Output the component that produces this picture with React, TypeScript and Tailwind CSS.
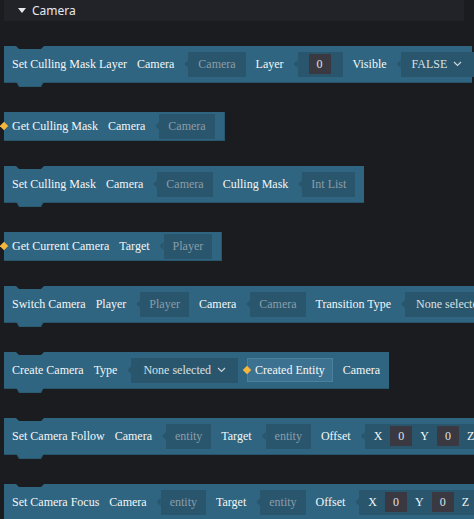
import React from "react";

type Kids = { children?: React.ReactNode; className?: string };

function Chevron() {
  return (
    <svg width="9" height="6" viewBox="0 0 9 6" className="ml-[6px]">
      <polyline points="1,1 4.5,4.5 8,1" fill="none" stroke="#c9d4db" strokeWidth="1.2" />
    </svg>
  );
}

function Diamond({ className }: { className: string }) {
  return <div className={`absolute h-[6px] w-[6px] rotate-45 bg-[#f4b73c] ${className}`} />;
}

function Slot({ children, className }: Kids) {
  return (
    <div className="flex shrink-0 items-center">
      <div className="h-[8px] w-[4px] bg-[#29566d] [clip-path:polygon(100%_0,100%_100%,0_50%)]" />
      <div className={`flex h-[25px] items-center bg-[#29566d] ${className ?? "px-[9px]"}`}>{children}</div>
    </div>
  );
}

function Hint({ children }: Kids) {
  return <span className="text-[#8b9da9]">{children}</span>;
}

function Label({ children }: Kids) {
  return <span className="shrink-0 whitespace-nowrap text-[#f4f7f9]">{children}</span>;
}

function NumBox() {
  return (
    <div className="flex h-[20px] w-[22px] items-center justify-center bg-[#3a3942] text-[#dfe4e8]">0</div>
  );
}

function Vec() {
  return (
    <Slot className="gap-[8px] pl-[9px] pr-[10px]">
      <Label>X</Label>
      <NumBox />
      <Label>Y</Label>
      <NumBox />
      <Label>Z</Label>
      <NumBox />
    </Slot>
  );
}

function StackBlock({ children, className }: Kids) {
  return (
    <div
      className={`relative mb-[29px] flex h-[37px] shrink-0 items-center gap-[10px] border-b border-[#27546a] bg-[#2f6580] pl-[8px] pr-[9px] ${className ?? "w-max"}`}
    >
      <div className="absolute left-[12px] top-0 h-[3px] w-[28px] bg-[#1b1c20] [clip-path:polygon(0_0,100%_0,calc(100%-3px)_100%,3px_100%)]" />
      <div className="absolute -bottom-[5px] left-[12px] h-[5px] w-[28px] bg-[#2a5b73] [clip-path:polygon(0_0,100%_0,calc(100%-3px)_100%,3px_100%)]" />
      <div className="absolute -bottom-[4px] left-[13px] h-[4px] w-[26px] bg-[#2f6580] [clip-path:polygon(0_0,100%_0,calc(100%-3px)_100%,3px_100%)]" />
      {children}
    </div>
  );
}

function GetBlock({ children }: Kids) {
  return (
    <div className="relative mb-[25px] flex h-[29px] w-max items-center gap-[10px] border-b border-r border-[#28566c] bg-[#2f6580] pl-[8px] pr-[9px]">
      <Diamond className="-left-[3px] top-[11px]" />
      {children}
    </div>
  );
}

export default function App() {
  return (
    <div className="h-screen w-screen overflow-hidden bg-[#1b1c20] font-serif text-[12px]">
      <div className="ml-[4px] flex h-[21px] w-[460px] items-center bg-[#222329] pl-[14px] font-sans text-[12px] text-[#e6e9ee]">
        <svg width="8" height="5" viewBox="0 0 8 5">
          <polygon points="0,0 8,0 4,5" fill="#e6e9ee" />
        </svg>
        <span className="ml-[6px]">Camera</span>
      </div>

      <div className="flex flex-col items-start pl-[4px] pt-[25px] font-[Liberation_Serif,serif]">
        <StackBlock className="w-[468px]">
          <Label>Set Culling Mask Layer</Label>
          <Label>Camera</Label>
          <Slot className="px-[10px]">
            <Hint>Camera</Hint>
          </Slot>
          <Label>Layer</Label>
          <Slot className="pl-[11px] pr-[12px]">
            <NumBox />
          </Slot>
          <Label>Visible</Label>
          <Slot className="pl-[11px] pr-[12px] text-[#d9e0e5]">
            FALSE
            <Chevron />
          </Slot>
        </StackBlock>

        <GetBlock>
          <Label>Get Culling Mask</Label>
          <Label>Camera</Label>
          <Slot>
            <Hint>Camera</Hint>
          </Slot>
        </GetBlock>

        <StackBlock>
          <Label>Set Culling Mask</Label>
          <Label>Camera</Label>
          <Slot>
            <Hint>Camera</Hint>
          </Slot>
          <Label>Culling Mask</Label>
          <Slot>
            <Hint>Int List</Hint>
          </Slot>
        </StackBlock>

        <GetBlock>
          <Label>Get Current Camera</Label>
          <Label>Target</Label>
          <Slot>
            <Hint>Player</Hint>
          </Slot>
        </GetBlock>

        <StackBlock>
          <Label>Switch Camera</Label>
          <Label>Player</Label>
          <Slot>
            <Hint>Player</Hint>
          </Slot>
          <Label>Camera</Label>
          <Slot>
            <Hint>Camera</Hint>
          </Slot>
          <Label>Transition Type</Label>
          <Slot className="pl-[11px] pr-[12px] text-[#d9e0e5]">
            None selected
            <Chevron />
          </Slot>
        </StackBlock>

        <StackBlock>
          <Label>Create Camera</Label>
          <Label>Type</Label>
          <Slot className="pl-[12px] pr-[12px] text-[#d9e0e5]">
            None selected
            <Chevron />
          </Slot>
          <div className="relative ml-[-1px] flex h-[24px] shrink-0 items-center border border-[#4b819b] bg-[#3c7290] px-[7px] text-[#f4f7f9]">
            <Diamond className="-left-[4px] top-[8px]" />
            Created Entity
          </div>
          <Label>Camera</Label>
        </StackBlock>

        <StackBlock>
          <Label>Set Camera Follow</Label>
          <Label>Camera</Label>
          <Slot>
            <Hint>entity</Hint>
          </Slot>
          <Label>Target</Label>
          <Slot>
            <Hint>entity</Hint>
          </Slot>
          <Label>Offset</Label>
          <Vec />
        </StackBlock>

        <StackBlock>
          <Label>Set Camera Focus</Label>
          <Label>Camera</Label>
          <Slot>
            <Hint>entity</Hint>
          </Slot>
          <Label>Target</Label>
          <Slot>
            <Hint>entity</Hint>
          </Slot>
          <Label>Offset</Label>
          <Vec />
        </StackBlock>
      </div>
    </div>
  );
}
